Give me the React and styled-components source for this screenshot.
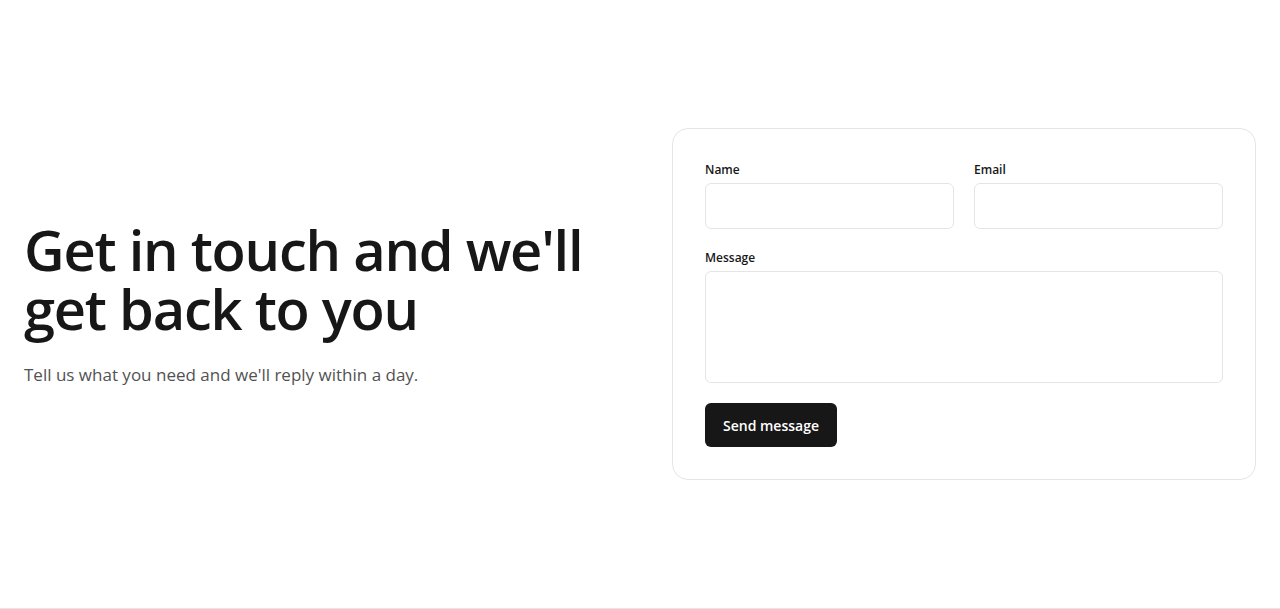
import styled, { createGlobalStyle } from "styled-components";

const GlobalStyle = createGlobalStyle`
  * { box-sizing: border-box; }
  body {
    margin: 0;
    background: #ffffff;
    font-family: "Segoe UI", "Open Sans", "Noto Sans", sans-serif;
    color: #171717;
  }
`;

const Contact = () => {
  return (
    <>
      <GlobalStyle />
      <Section>
        <Intro>
          <Heading>Get in touch and we'll get back to you</Heading>
          <Lead>Tell us what you need and we'll reply within a day.</Lead>
        </Intro>
        <Card onSubmit={(e) => e.preventDefault()}>
          <Row>
            <Field>
              <Label htmlFor="name">Name</Label>
              <Input id="name" type="text" />
            </Field>
            <Field>
              <Label htmlFor="email">Email</Label>
              <Input id="email" type="email" />
            </Field>
          </Row>
          <Field>
            <Label htmlFor="message">Message</Label>
            <TextArea id="message" />
          </Field>
          <div>
            <Button type="submit">Send message</Button>
          </div>
        </Card>
      </Section>
    </>
  );
};

const Section = styled.section`
  height: 609px;
  padding: 0 24px;
  display: grid;
  grid-template-columns: 1fr 1fr;
  column-gap: 64px;
  align-items: center;
  border-bottom: 1px solid #e5e5e5;
`;

const Intro = styled.div`
  display: flex;
  flex-direction: column;
  gap: 24px;
`;

const Heading = styled.h1`
  margin: 0;
  font-size: 56px;
  line-height: 59px;
  font-weight: 600;
  letter-spacing: -0.022em;
  color: #171717;
  max-width: 584px;
`;

const Lead = styled.p`
  margin: 0;
  font-size: 17px;
  line-height: 26px;
  color: #525252;
`;

const Card = styled.form`
  border: 1px solid #e5e5e5;
  border-radius: 16px;
  padding: 32px;
  display: flex;
  flex-direction: column;
  gap: 20px;
`;

const Row = styled.div`
  display: grid;
  grid-template-columns: 1fr 1fr;
  gap: 20px;
`;

const Field = styled.div`
  display: flex;
  flex-direction: column;
  gap: 5px;
`;

const Label = styled.label`
  font-size: 12px;
  line-height: 16px;
  padding-top: 1px;
  font-weight: 600;
  color: #171717;
`;

const Input = styled.input`
  height: 46px;
  border: 1px solid #e5e5e5;
  border-radius: 6px;
  padding: 0 12px;
  font: inherit;
  font-size: 14px;
  outline: none;
`;

const TextArea = styled.textarea`
  height: 112px;
  border: 1px solid #e5e5e5;
  border-radius: 6px;
  padding: 10px 12px;
  font: inherit;
  font-size: 14px;
  resize: none;
  outline: none;
`;

const Button = styled.button`
  height: 44px;
  padding: 0 18px;
  border: none;
  border-radius: 6px;
  background: #171717;
  color: #ffffff;
  font-family: inherit;
  font-size: 14px;
  font-weight: 600;
  cursor: pointer;
`;

export default Contact;
